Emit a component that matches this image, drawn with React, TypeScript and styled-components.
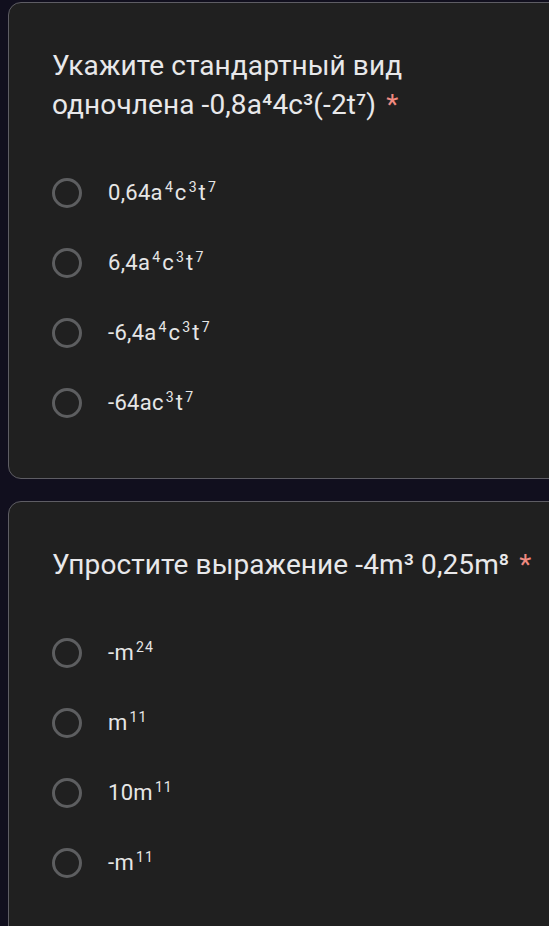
import React from "react";
import styled, { createGlobalStyle } from "styled-components";

const Global = createGlobalStyle`
  html, body { margin: 0; padding: 0; background: #110f1e; }
  body { font-family: Roboto, "Noto Sans", sans-serif; overflow: hidden; }
`;

const Page = styled.div`
  width: 549px;
  height: 926px;
  overflow: hidden;
  padding: 2px 0 0 8px;
  box-sizing: border-box;
  display: flex;
  flex-direction: column;
  gap: 22px;
`;

const Card = styled.section`
  width: 580px;
  box-sizing: border-box;
  background: #202020;
  border: 1.5px solid #5e5d64;
  border-radius: 13px;
  padding: 43px 0 40px 43px;
  display: flex;
  flex-direction: column;
  gap: 34px;
  flex-shrink: 0;
`;

const Title = styled.h2<{ $wide?: boolean }>`
  margin: 0;
  width: ${(p) => (p.$wide ? "520px" : "440px")};
  font-family: Roboto, "Noto Sans", sans-serif;
  font-weight: 400;
  font-size: 28px;
  line-height: 39px;
  color: #e8e8ea;
  letter-spacing: 0.1px;
`;

const Star = styled.span`
  color: #f08a80;
  margin-left: 10px;
`;

const Options = styled.div`
  display: flex;
  flex-direction: column;
`;

const Option = styled.label`
  display: flex;
  align-items: center;
  height: 70px;
  gap: 26px;
`;

const Radio = styled.span`
  width: 30px;
  height: 30px;
  box-sizing: border-box;
  border: 3px solid #5d5e60;
  border-radius: 50%;
  flex-shrink: 0;
`;

const OptionText = styled.span`
  font-family: Roboto, "Noto Sans", sans-serif;
  font-size: 22px;
  color: #e6e6e6;
  line-height: 28px;
  letter-spacing: 0.3px;
`;

const Sup = styled.sup`
  font-size: 0.64em;
  vertical-align: 0.6em;
  line-height: 0;
  margin: 0 1px 0 2px;
  letter-spacing: 1px;
`;

type Part = string | { sup: string };
type Q = { title: string; options: Part[][]; wide?: boolean };

const questions: Q[] = [
  {
    title: "Укажите стандартный вид одночлена -0,8a⁴4c³(-2t⁷)",
    options: [
      ["0,64a", { sup: "4" }, "c", { sup: "3" }, "t", { sup: "7" }],
      ["6,4a", { sup: "4" }, "c", { sup: "3" }, "t", { sup: "7" }],
      ["-6,4a", { sup: "4" }, "c", { sup: "3" }, "t", { sup: "7" }],
      ["-64ac", { sup: "3" }, "t", { sup: "7" }],
    ],
  },
  {
    title: "Упростите выражение -4m³ 0,25m⁸",
    options: [
      ["-m", { sup: "24" }],
      ["m", { sup: "11" }],
      ["10m", { sup: "11" }],
      ["-m", { sup: "11" }],
    ],
    wide: true,
  },
];

export default function App() {
  return (
    <>
      <Global />
      <Page>
        {questions.map((q, i) => (
          <Card key={i}>
            <Title $wide={q.wide}>
              {q.title}
              <Star>*</Star>
            </Title>
            <Options>
              {q.options.map((o, j) => (
                <Option key={j}>
                  <Radio />
                  <OptionText>
                    {o.map((p, k) =>
                      typeof p === "string" ? (
                        <React.Fragment key={k}>{p}</React.Fragment>
                      ) : (
                        <Sup key={k}>{p.sup}</Sup>
                      )
                    )}
                  </OptionText>
                </Option>
              ))}
            </Options>
          </Card>
        ))}
      </Page>
    </>
  );
}
